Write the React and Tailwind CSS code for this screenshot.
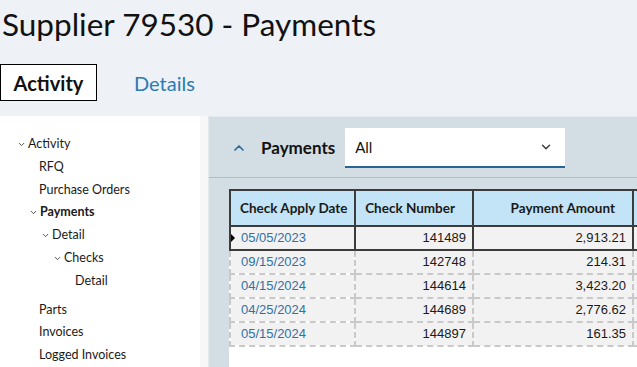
import { ChevronDown, ChevronUp } from 'lucide-react'

const navItems = [
  { label: 'Activity', level: 0, open: true },
  { label: 'RFQ', level: 1 },
  { label: 'Purchase Orders', level: 1 },
  { label: 'Payments', level: 1, open: true, bold: true },
  { label: 'Detail', level: 2, open: true },
  { label: 'Checks', level: 3, open: true },
  { label: 'Detail', level: 4, gapAfter: true },
  { label: 'Parts', level: 1 },
  { label: 'Invoices', level: 1 },
  { label: 'Logged Invoices', level: 1 },
]

// chevron rows start 10px left of where a plain row's text would sit
const indent = ['pl-[17px]', 'pl-[29px]', 'pl-[41px]', 'pl-[53px]', 'pl-[75px]']

const payments = [
  { date: '05/05/2023', check: '141489', amount: '2,913.21' },
  { date: '09/15/2023', check: '142748', amount: '214.31' },
  { date: '04/15/2024', check: '144614', amount: '3,423.20' },
  { date: '04/25/2024', check: '144689', amount: '2,776.62' },
  { date: '05/15/2024', check: '144897', amount: '161.35' },
]

const NavTree = () => (
  <ul className='pt-[17px] text-[12.5px] text-[#1a1a1a] whitespace-nowrap'>
    {navItems.map((item, i) => (
      <li
        key={i}
        className={`flex items-center h-[22.8px] ${item.open || item.level === 0 || item.level === 4 ? indent[item.level] : 'pl-[39px]'} ${item.gapAfter ? 'mb-[6px]' : ''} ${item.bold ? 'font-bold' : ''}`}
      >
        {item.open && <ChevronDown size={9} strokeWidth={2.5} className='mr-[2px] text-[#444]' />}
        <span>{item.label}</span>
      </li>
    ))}
  </ul>
)

const PaymentsTable = () => (
  <table className='border-collapse table-fixed w-[560px] text-[13px]'>
    <colgroup>
      <col className='w-[125px]' />
      <col className='w-[118px]' />
      <col className='w-[160px]' />
      <col className='w-[157px]' />
    </colgroup>
    <thead>
      <tr className='h-[36px] bg-[#c3e4f6] text-[#1a1a1a] text-[13.5px]'>
        <th className='border-2 border-[#3c3c3c] text-left pl-[9px] font-bold whitespace-nowrap'>Check Apply Date</th>
        <th className='border-2 border-[#3c3c3c] text-right pr-[17px] font-bold'>Check Number</th>
        <th className='border-2 border-[#3c3c3c] text-right pr-[17px] font-bold'>Payment Amount</th>
        <th className='border-2 border-[#3c3c3c]'></th>
      </tr>
    </thead>
    <tbody style={{ fontFamily: '"Liberation Sans", Arial, sans-serif' }}>
      {payments.map((p, i) => {
        const cell = i === 0
          ? 'border-2 border-solid border-[#3c3c3c]'
          : 'border-2 border-dashed border-[#c9c9c9]'
        return (
          <tr key={p.check} className='h-[24px] bg-[#f2f2f2]'>
            <td className={`${cell} relative pl-[10px] text-[#2f72a6]`}>
              {i === 0 && (
                <span className='absolute left-0 top-1/2 -translate-y-1/2 w-0 h-0 border-y-[4px] border-y-transparent border-l-[4px] border-l-black' />
              )}
              {p.date}
            </td>
            <td className={`${cell} text-right pr-[6px] text-[#1a1a1a]`}>{p.check}</td>
            <td className={`${cell} text-right pr-[6px] text-[#1a1a1a]`}>{p.amount}</td>
            <td className={cell}></td>
          </tr>
        )
      })}
    </tbody>
  </table>
)

export default function App () {
  return (
    <div className='w-[637px] h-[367px] overflow-hidden bg-[#eef1f5] flex flex-col' style={{ fontFamily: 'Lato, "Noto Sans", sans-serif' }}>
      <h1 className='pl-[2px] pt-[4px] h-[53px] text-[31.5px] leading-[40px] text-[#111] whitespace-nowrap'>Supplier 79530 - Payments</h1>
      <div className='flex items-center h-[63px] pb-[15px] pt-[11px]'>
        <button className='h-[37px] w-[97px] border border-black bg-white text-[20px] font-bold text-[#111]'>Activity</button>
        <button className='ml-[37px] text-[20px] text-[#2b7bb2]'>Details</button>
      </div>
      <div className='flex flex-1 min-h-0'>
        <aside className='w-[200px] shrink-0 bg-white'>
          <NavTree />
        </aside>
        <div className='w-[8px] shrink-0 bg-[#f7f7f7]' />
        <section className='flex-1 min-w-0 flex flex-col bg-[#d2dee3] border-t border-l border-[#e3e9ec]'>
          <header className='h-[61px] shrink-0 flex items-center border-b border-[#9cc4d4] pl-[22px] pt-[2px]'>
            <ChevronUp size={16} strokeWidth={2.5} className='text-[#2a6a98]' />
            <span className='ml-[14px] text-[17px] font-bold text-[#111]'>Payments</span>
            <div className='ml-[10px] w-[220px] shrink-0 h-[40px] bg-white border-b-2 border-[#2a6496] flex items-center justify-between pl-[10px] pr-[12px]'>
              <span className='text-[15px] text-[#111]'>All</span>
              <ChevronDown size={14} strokeWidth={2.2} className='text-[#333]' />
            </div>
          </header>
          <div className='flex-1 min-h-0 pt-[11px] pl-[20px]'>
            <div className='h-full bg-white overflow-hidden'>
              <PaymentsTable />
            </div>
          </div>
        </section>
      </div>
    </div>
  )
}
